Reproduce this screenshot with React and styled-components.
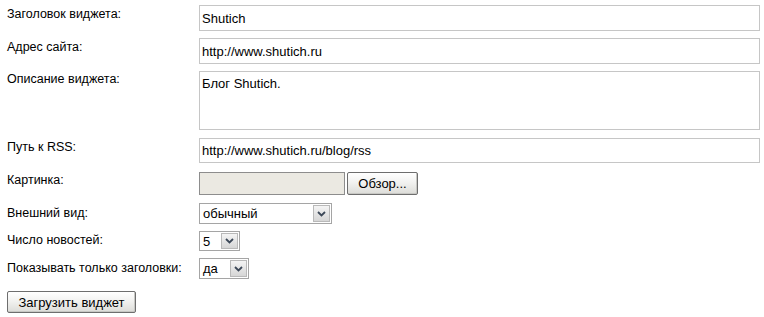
import React from "react";
import styled, { createGlobalStyle } from "styled-components";

const GlobalStyle = createGlobalStyle`
  body {
    margin: 0;
    background: #fff;
    font-family: "Liberation Sans", Arial, sans-serif;
    color: #000;
  }
`;

const Form = styled.form`
  padding: 5px 4px 0 7px;
  width: 764px;
  box-sizing: border-box;
`;

const Row = styled.div`
  display: grid;
  grid-template-columns: 192px 1fr;
  align-items: start;
  margin-bottom: ${(p) => p.$mb || 7}px;
`;

const Label = styled.label`
  font-size: 12.5px;
  line-height: 14px;
  padding-top: ${(p) => p.$pt || 1}px;
  white-space: nowrap;
`;

const TextInput = styled.input`
  box-sizing: border-box;
  width: 561px;
  height: ${(p) => p.$h || 26}px;
  border: 1px solid #c6c6c6;
  padding: 0 2px;
  font-family: "Liberation Sans", Arial, sans-serif;
  font-size: 13px;
  color: #000;
  outline: none;
  margin: 0;
`;

const TextArea = styled.textarea`
  box-sizing: border-box;
  width: 561px;
  height: 59px;
  border: 1px solid #c6c6c6;
  padding: 4px 2px;
  font-family: "Liberation Sans", Arial, sans-serif;
  font-size: 13px;
  line-height: 15px;
  resize: none;
  outline: none;
  margin: 0;
  display: block;
`;

const FileRow = styled.div`
  display: flex;
  gap: 2px;
`;

const FilePath = styled.div`
  box-sizing: border-box;
  width: 146px;
  height: 23px;
  background: #ebe9e2;
  border: 1px solid #8d8d8d;
`;

const XpButton = styled.button`
  box-sizing: border-box;
  height: ${(p) => p.$h || 23}px;
  width: ${(p) => p.$w}px;
  padding: 0;
  margin: 0;
  font-family: "Liberation Sans", Arial, sans-serif;
  font-size: 13px;
  color: #000;
  border: 1px solid #6e6e6e;
  border-radius: 2px;
  background: linear-gradient(#ffffff 0%, #f2f2f0 45%, #dcdcd8 100%);
  box-shadow: inset -1px -1px 0 #c8c8c4;
  cursor: pointer;
  display: block;
`;

const SelectBox = styled.div`
  box-sizing: border-box;
  display: flex;
  align-items: stretch;
  width: ${(p) => p.$w}px;
  height: ${(p) => p.$h || 21}px;
  border: 1px solid #a5a5a5;
  background: #fff;
`;

const SelectText = styled.span`
  flex: 1;
  font-size: 13px;
  line-height: 19px;
  padding-left: 3px;
`;

const ArrowBox = styled.span`
  box-sizing: border-box;
  width: 17px;
  margin: 1px;
  display: flex;
  align-items: center;
  justify-content: center;
  background: linear-gradient(#f4f4f4, #d6d6d6);
  border: 1px solid #b9b9b9;
`;

const Submit = styled.div`
  padding-top: 5px;
`;

const Chevron = () => (
  <svg width="9" height="6" viewBox="0 0 9 6">
    <path d="M1 1 L4.5 4.5 L8 1" fill="none" stroke="#3c4858" strokeWidth="1.8" />
  </svg>
);

const Select = ({ value, w, h }) => (
  <SelectBox $w={w} $h={h}>
    <SelectText>{value}</SelectText>
    <ArrowBox>
      <Chevron />
    </ArrowBox>
  </SelectBox>
);

export default function App() {
  return (
    <>
      <GlobalStyle />
      <Form>
        <Row>
          <Label $pt={2}>Заголовок виджета:</Label>
          <TextInput defaultValue="Shutich" />
        </Row>
        <Row>
          <Label $pt={2}>Адрес сайта:</Label>
          <TextInput defaultValue="http://www.shutich.ru" />
        </Row>
        <Row $mb={8}>
          <Label $pt={1}>Описание виджета:</Label>
          <TextArea defaultValue="Блог Shutich." />
        </Row>
        <Row $mb={9}>
          <Label $pt={2}>Путь к RSS:</Label>
          <TextInput $h={25} defaultValue="http://www.shutich.ru/blog/rss" />
        </Row>
        <Row $mb={8}>
          <Label $pt={1}>Картинка:</Label>
          <FileRow>
            <FilePath />
            <XpButton type="button" $w={71}>
              Обзор...
            </XpButton>
          </FileRow>
        </Row>
        <Row $mb={7}>
          <Label $pt={3}>Внешний вид:</Label>
          <Select value="обычный" w={133} />
        </Row>
        <Row $mb={7}>
          <Label $pt={2}>Число новостей:</Label>
          <Select value="5" w={41} h={20} />
        </Row>
        <Row $mb={7}>
          <Label $pt={3}>Показывать только заголовки:</Label>
          <Select value="да" w={50} />
        </Row>
        <Submit>
          <XpButton type="button" $w={129} $h={22}>
            Загрузить виджет
          </XpButton>
        </Submit>
      </Form>
    </>
  );
}
